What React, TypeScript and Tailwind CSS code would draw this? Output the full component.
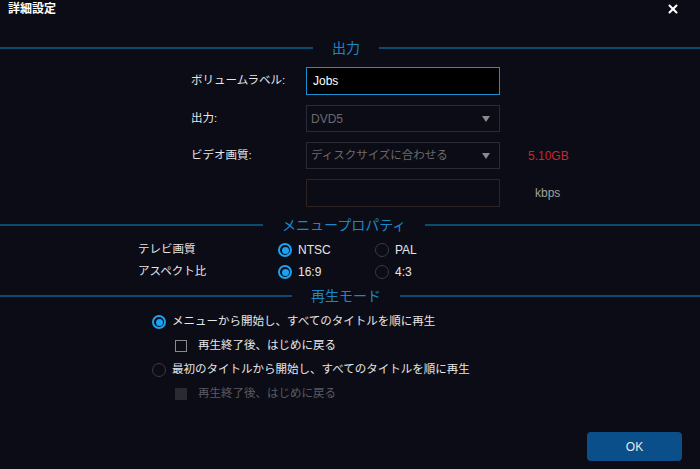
import { X } from 'lucide-react';

const font = { fontFamily: '"Liberation Sans", "Noto Sans CJK JP", sans-serif' };

function SectionHeader({ title, lineClass }: { title: string; lineClass: string }) {
  return (
    <div className="flex items-center">
      <div className={`h-[2px] bg-[#0d4a70] ${lineClass}`} />
      <span className="px-[19px] text-[14px] leading-[18px] text-[#1c86c6]">{title}</span>
      <div className="h-[2px] flex-1 bg-[#0d4a70]" />
    </div>
  );
}

function Caret() {
  return (
    <svg width="8" height="6" viewBox="0 0 8 6" className="text-[#8a8a8a]">
      <path d="M0 0h8L4 6z" fill="currentColor" />
    </svg>
  );
}

function Radio({ checked }: { checked?: boolean }) {
  return checked ? (
    <span className="flex h-[14px] w-[14px] items-center justify-center rounded-full border-[2px] border-[#1aa3f2]">
      <span className="h-[7px] w-[7px] rounded-full bg-[#1aa3f2]" />
    </span>
  ) : (
    <span className="h-[14px] w-[14px] rounded-full border border-[#3a3a44]" />
  );
}

export default function App() {
  return (
    <div style={font} className="relative h-[469px] w-[700px] overflow-hidden bg-[#0c0c16] text-[#e6e6e6]">
      {/* Title bar */}
      <div className="flex h-[18px] items-center justify-between pl-[8px] pr-[20px]">
        <span className="text-[12px] font-bold text-white">詳細設定</span>
        <X className="h-[14px] w-[14px] text-white" strokeWidth={3.5} />
      </div>

      {/* 出力 */}
      <div className="mt-[21px]">
        <SectionHeader title="出力" lineClass="w-[313px]" />
      </div>

      <div className="mt-[10px] flex flex-col gap-[10px] pl-[191px] text-[11.5px]">
        <div className="flex items-center">
          <span className="w-[115px]">ボリュームラベル:</span>
          <div className="flex h-[28px] w-[194px] items-center border border-[#1a8fd0] bg-black px-[6px] text-[12px] text-white">
            Jobs
          </div>
        </div>
        <div className="flex items-center">
          <span className="w-[115px]">出力:</span>
          <div className="flex h-[27px] w-[194px] items-center justify-between border border-[#2b2b35] px-[4px] pr-[9px] text-[12px] text-[#6a6a6a]">
            <span>DVD5</span>
            <Caret />
          </div>
        </div>
        <div className="flex items-center">
          <span className="w-[115px]">ビデオ画質:</span>
          <div className="flex h-[27px] w-[194px] items-center justify-between border border-[#2b2b35] px-[4px] pr-[9px] text-[#6a6a6a]">
            <span>ディスクサイズに合わせる</span>
            <Caret />
          </div>
          <span className="ml-[28px] text-[12px] text-[#c8282d]">5.10GB</span>
        </div>
        <div className="flex items-center">
          <span className="w-[115px]" />
          <div className="h-[28px] w-[194px] border border-[#2e2422]" />
          <span className="ml-[35px] text-[12px] text-[#a0a0a0]">kbps</span>
        </div>
      </div>

      {/* メニュープロパティ */}
      <div className="mt-[9px]">
        <SectionHeader title="メニュープロパティ" lineClass="w-[263px]" />
      </div>

      <div className="mt-[8px] flex flex-col gap-[6px] pl-[138px] text-[11.5px]">
        <div className="flex h-[16px] items-center">
          <span className="w-[140px]">テレビ画質</span>
          <div className="flex w-[97px] items-center gap-[6px]">
            <Radio checked />
            <span className="text-[12px]">NTSC</span>
          </div>
          <div className="flex items-center gap-[6px]">
            <Radio />
            <span className="text-[12px]">PAL</span>
          </div>
        </div>
        <div className="flex h-[16px] items-center">
          <span className="w-[140px]">アスペクト比</span>
          <div className="flex w-[97px] items-center gap-[6px]">
            <Radio checked />
            <span className="text-[12px]">16:9</span>
          </div>
          <div className="flex items-center gap-[6px]">
            <Radio />
            <span className="text-[12px]">4:3</span>
          </div>
        </div>
      </div>

      {/* 再生モード */}
      <div className="mt-[7px]">
        <SectionHeader title="再生モード" lineClass="w-[292px]" />
      </div>

      <div className="mt-[9px] flex flex-col gap-[8px] pl-[152px] text-[11.5px]">
        <div className="flex h-[16px] items-center gap-[6px]">
          <Radio checked />
          <span>メニューから開始し、すべてのタイトルを順に再生</span>
        </div>
        <div className="flex h-[16px] items-center gap-[11px] pl-[23px]">
          <span className="h-[12px] w-[12px] border border-[#8a8a8a]" />
          <span>再生終了後、はじめに戻る</span>
        </div>
        <div className="flex h-[16px] items-center gap-[6px]">
          <Radio />
          <span>最初のタイトルから開始し、すべてのタイトルを順に再生</span>
        </div>
        <div className="flex h-[16px] items-center gap-[11px] pl-[23px] text-[#5a5a62]">
          <span className="h-[12px] w-[12px] bg-[#2a2a33]" />
          <span>再生終了後、はじめに戻る</span>
        </div>
      </div>

      {/* Footer */}
      <div className="mt-[30px] flex justify-end pr-[18px]">
        <button className="h-[29px] w-[95px] rounded-[4px] bg-[#0a4f8a] text-[12px] text-[#e8e8e8]">OK</button>
      </div>
    </div>
  );
}
